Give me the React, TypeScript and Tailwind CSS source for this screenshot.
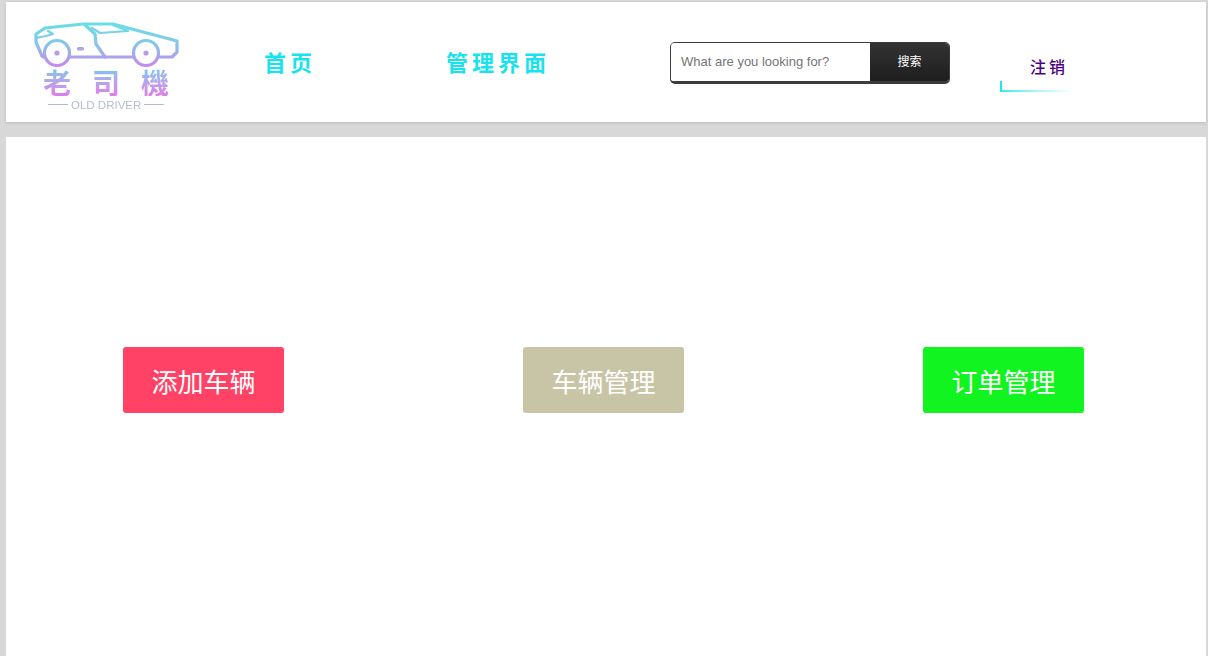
const cjk = "font-['Liberation_Sans','Noto_Sans_CJK_SC',sans-serif]";

function Logo() {
  return (
    <div className="mt-[6px] flex w-[150px] flex-col blur-[0.5px]">
      <svg viewBox="33 20 150 48" className="h-[48px] w-[150px]" fill="none">
        <defs>
          <linearGradient id="car" gradientUnits="userSpaceOnUse" x1="0" y1="22" x2="0" y2="66">
            <stop offset="0" stopColor="#66e0e6" />
            <stop offset="0.5" stopColor="#85c6ea" />
            <stop offset="1" stopColor="#c58aee" />
          </linearGradient>
        </defs>
        <g stroke="url(#car)" strokeWidth="3.2" strokeLinejoin="round" strokeLinecap="round">
          <path d="M44 57 L42 56 L36 42 L36 34 L45 28 L83 24 L113 24 L177 41 L177 52 L172 57 L160 57 M132 57 L105 57 L96 44 L95 34 L84 24" />
          <path d="M92 28 L100 33 L128 31 L113 25" strokeWidth="2.2" />
          <path d="M36 38 L46 36 L53 34 L48 31" strokeWidth="2.2" />
          <circle cx="57" cy="53" r="12.5" />
          <circle cx="146" cy="53" r="12.5" />
          <path d="M70 57 L105 57" />
        </g>
        <circle cx="57" cy="53" r="2.6" fill="#b79aea" />
        <circle cx="146" cy="53" r="2.6" fill="#b79aea" />
        <rect x="77" y="47" width="7" height="3.4" rx="1.5" fill="#a7a8ea" />
      </svg>
      <div className="ml-[10px] h-[28px] w-[147px] bg-gradient-to-b from-[#70c8f0] to-[#e07ae8] bg-clip-text text-[28px] leading-[28px] font-bold tracking-[21px] whitespace-nowrap text-transparent [font-family:'Noto_Sans_CJK_TC',sans-serif]">
        老司機
      </div>
      <div className="mt-[3px] ml-[15px] flex items-center gap-[3px] text-[11.5px] leading-[12px] text-[#b3bccf] [font-family:'Liberation_Sans',sans-serif]">
        <span className="h-px w-[20px] bg-[#b3bccf]" />
        OLD DRIVER
        <span className="h-px w-[20px] bg-[#b3bccf]" />
      </div>
    </div>
  );
}

function Header() {
  return (
    <header className="flex h-[120px] items-center bg-white pl-[27px] shadow-[0_1px_3px_rgba(0,0,0,0.12)]">
      <Logo />
      <nav className={`mt-[2px] ml-[81px] flex items-center gap-[130px] text-[22px] font-bold tracking-[4px] text-[#17e3ee] ${cjk}`}>
        <a>首页</a>
        <a>管理界面</a>
      </nav>
      <div className="mt-[2px] ml-[120px] flex h-[42px] w-[280px] overflow-hidden rounded-[5px] border border-b-[3px] border-[#3c3c3c]">
        <div className="flex flex-1 items-center bg-white pl-[10px] text-[13px] text-[#757575] [font-family:'Liberation_Sans',sans-serif]">
          What are you looking for?
        </div>
        <button className={`w-[79px] bg-gradient-to-b from-[#333333] to-[#1e1e1e] text-[12px] text-white ${cjk}`}>
          搜索
        </button>
      </div>
      <div className="relative mt-[22px] ml-[50px] h-[38px] w-[75px] pt-px pl-[30px]">
        <span className={`text-[16px] leading-[22px] font-medium tracking-[3px] text-[#4b0082] ${cjk}`}>注销</span>
        <span className="absolute bottom-0 left-0 h-[11px] w-[2px] bg-[#1de9ee]" />
        <span className="absolute bottom-0 left-0 h-[2px] w-full bg-gradient-to-r from-[#1de9ee] to-white" />
      </div>
    </header>
  );
}

function ActionButton({ label, color }: { label: string; color: string }) {
  return (
    <button className={`h-[66px] w-[161px] rounded-[3px] pt-[7px] text-[26px] text-white ${color} ${cjk}`}>
      {label}
    </button>
  );
}

export default function App() {
  return (
    <div className="flex h-[656px] flex-col gap-[15px] overflow-hidden bg-[#d8d8d8] pt-[2px] pr-[2px] pl-[6px]">
      <Header />
      <main className="flex flex-1 items-center justify-between bg-white pr-[122px] pb-[34px] pl-[117px]">
        <ActionButton label="添加车辆" color="bg-[#ff4265]" />
        <ActionButton label="车辆管理" color="bg-[#c8c5a6]" />
        <ActionButton label="订单管理" color="bg-[#11f41f]" />
      </main>
    </div>
  );
}
